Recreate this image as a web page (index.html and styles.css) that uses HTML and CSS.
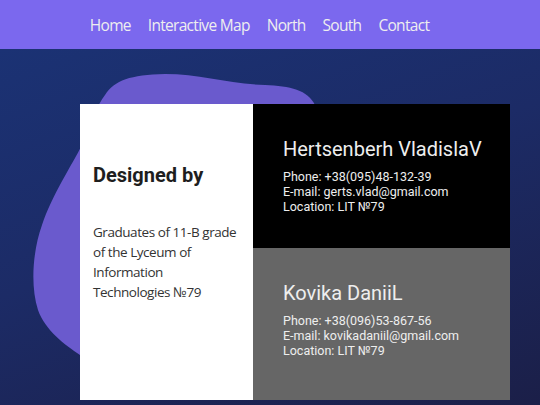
FILE: index.html
```html
<!DOCTYPE html>
<html lang="en">
<head>
<meta charset="utf-8">
<title>Designed by</title>
<link rel="stylesheet" href="styles.css">
</head>
<body>
<nav class="topnav">
  <a href="#" class="nav-link">Home</a>
  <a href="#" class="nav-link">Interactive Map</a>
  <a href="#" class="nav-link">North</a>
  <a href="#" class="nav-link">South</a>
  <a href="#" class="nav-link">Contact</a>
</nav>
<main class="hero">
  <svg class="blob" viewBox="0 0 540 356" width="540" height="356" aria-hidden="true">
    <path d="M82 96 C90 76 97 56 105 46 C115 31 130 26 165 25 C200 25 230 35 265 36 C290 37 308 41 315 56 L320 251 L80 306 C65 296 45 281 38 261 C30 236 33 201 42 176 C52 146 72 116 82 96 Z" fill="#6a5acd"/>
  </svg>
  <section class="card">
    <div class="intro">
      <h1 class="intro-title">Designed by</h1>
      <p class="intro-text">Graduates of 11-B grade of the Lyceum of Information Technologies №79</p>
    </div>
    <div class="people">
      <div class="person person-dark">
        <h2 class="person-name">Hertsenberh VladislaV</h2>
        <p class="person-info">Phone: +38(095)48-132-39<br>E-mail: gerts.vlad@gmail.com<br>Location: LIT №79</p>
      </div>
      <div class="person person-gray">
        <h2 class="person-name">Kovika DaniiL</h2>
        <p class="person-info">Phone: +38(096)53-867-56<br>E-mail: kovikadaniil@gmail.com<br>Location: LIT №79</p>
      </div>
    </div>
  </section>
</main>
</body>
</html>
```

FILE: styles.css
```css
html, body {
  margin: 0;
  padding: 0;
}
body {
  width: 540px;
  height: 405px;
  overflow: hidden;
  background: #1b2a62;
}
.topnav {
  height: 49px;
  background: #7b68ee;
  display: flex;
  justify-content: center;
  align-items: center;
  gap: 17px;
  padding-right: 21px;
  box-sizing: border-box;
}
.nav-link {
  font-family: "Open Sans", "Liberation Sans", sans-serif;
  font-size: 15.5px;
  letter-spacing: -0.7px;
  color: #eeeeee;
  text-decoration: none;
  line-height: 22px;
  padding-top: 1px;
}
.hero {
  position: relative;
  height: 356px;
  background: linear-gradient(160deg, #1b3274 0%, #1c2b66 45%, #1b1f48 100%);
  padding: 55px 0 0 80px;
  box-sizing: border-box;
}
.blob {
  position: absolute;
  left: 0;
  top: 0;
}
.card {
  position: relative;
  display: flex;
  width: 430px;
  height: 296px;
}
.intro {
  width: 173px;
  background: #ffffff;
  padding: 59px 13px 0 13px;
  box-sizing: border-box;
}
.intro-title {
  margin: 0;
  font-family: Roboto, "Liberation Sans", sans-serif;
  font-weight: 700;
  font-size: 20px;
  line-height: 24px;
  color: #1e1e1e;
}
.intro-text {
  margin: 35px 0 0;
  font-family: "Open Sans", "Liberation Sans", sans-serif;
  font-size: 13.5px;
  letter-spacing: -0.45px;
  line-height: 20px;
  color: #333333;
}
.people {
  flex: 1;
  display: flex;
  flex-direction: column;
}
.person {
  box-sizing: border-box;
  padding: 32px 10px 0 30px;
  color: #eeeeee;
  font-family: Roboto, "Liberation Sans", sans-serif;
}
.person-dark {
  height: 144px;
  background: #000000;
}
.person-gray {
  flex: 1;
  background: #666666;
}
.person-name {
  margin: 0;
  font-weight: 400;
  font-size: 20px;
  line-height: 26px;
}
.person-info {
  margin: 7px 0 0;
  font-size: 12.5px;
  line-height: 15px;
}
```
